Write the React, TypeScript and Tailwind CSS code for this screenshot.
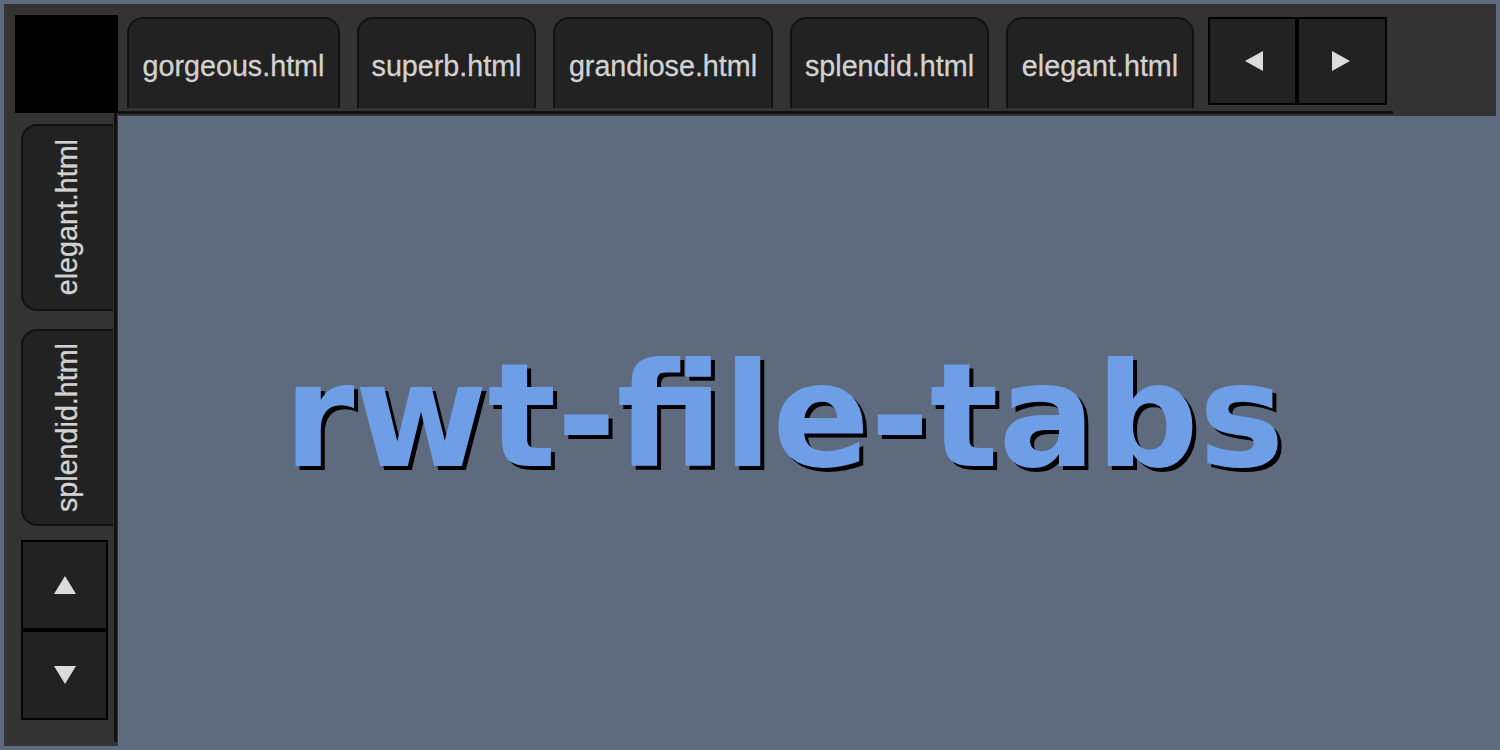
import React from "react";

const topTabs: { name: string; w: string }[] = [
  { name: "gorgeous.html", w: "w-[213px]" },
  { name: "superb.html", w: "w-[179px]" },
  { name: "grandiose.html", w: "w-[220px]" },
  { name: "splendid.html", w: "w-[199px]" },
  { name: "elegant.html", w: "w-[188px]" },
];

function Tri({ dir }: { dir: "left" | "right" | "up" | "down" }) {
  const pts: Record<string, string> = {
    left: "20,0 20,20 2,10",
    right: "0,0 0,20 18,10",
    up: "10,1 21,19 -1,19",
    down: "-1,1 21,1 10,19",
  };
  return (
    <svg width="20" height="20" viewBox="0 0 20 20" className="overflow-visible">
      <polygon points={pts[dir]} fill="#dcdcdc" />
    </svg>
  );
}

export default function App() {
  return (
    <div
      className="w-[1500px] h-[750px] bg-[#5e6b7f] p-[4px] grid grid-cols-[114px_1fr] grid-rows-[112px_1fr] overflow-hidden"
      style={{ fontFamily: '"Liberation Sans", Arial, sans-serif' }}
    >
      {/* top-left corner */}
      <div className="bg-[#333333] pl-[11px] pt-[11px]">
        <div className="w-[103px] h-[98px] bg-black" />
      </div>

      {/* top tab bar */}
      <div className="bg-[#333333] pt-[13px]">
        <div className="flex items-start w-fit border-b-[3px] border-[#111111] pl-[9px] pr-[6px] pb-[3px] gap-[17px]">
          {topTabs.map((t) => (
            <div
              key={t.name}
              className={`${t.w} h-[91px] shrink-0 bg-[#222222] border-2 border-b-0 border-[#111111] rounded-t-[16px] flex items-center justify-center pt-[6px] text-[28.7px] text-[#d2d2d2] [-webkit-text-stroke:0.3px_#d2d2d2]`}
            >
              {t.name}
            </div>
          ))}
          <div className="flex -ml-[3px]">
            <div className="w-[89px] h-[88px] bg-[#222222] border-2 border-black flex items-center justify-center">
              <Tri dir="left" />
            </div>
            <div className="w-[90px] h-[88px] bg-[#222222] border-2 border-black flex items-center justify-center">
              <Tri dir="right" />
            </div>
          </div>
        </div>
      </div>

      {/* left vertical tabs */}
      <div className="bg-[#333333] pb-[4px] flex">
        <div className="w-[113px] -mt-[3px] border-r-[3px] border-[#111111] pl-[17px] pr-[1px] pt-[11px] flex flex-col">
          <div className="w-[92px] h-[187px] bg-[#222222] border-2 border-r-0 border-[#111111] rounded-l-[16px] flex items-center justify-center">
            <span className="[writing-mode:vertical-rl] rotate-180 text-[28.7px] text-[#d2d2d2] [-webkit-text-stroke:0.3px_#d2d2d2]">elegant.html</span>
          </div>
          <div className="mt-[18px] w-[92px] h-[197px] bg-[#222222] border-2 border-r-0 border-[#111111] rounded-l-[16px] flex items-center justify-center">
            <span className="[writing-mode:vertical-rl] rotate-180 text-[28.7px] text-[#d2d2d2] [-webkit-text-stroke:0.3px_#d2d2d2]">splendid.html</span>
          </div>
          <div className="mt-[14px] w-[87px] h-[90px] bg-[#222222] border-2 border-black flex items-center justify-center">
            <Tri dir="up" />
          </div>
          <div className="w-[87px] h-[90px] bg-[#222222] border-2 border-black flex items-center justify-center">
            <Tri dir="down" />
          </div>
        </div>
      </div>

      {/* main content */}
      <div className="flex items-center justify-center pr-[46px] pb-[30px]">
        <h1
          className="text-[144px] leading-none font-bold text-[#6d9ee6] [text-shadow:4px_4px_0_#000]"
          style={{ fontFamily: '"DejaVu Sans", sans-serif' }}
        >
          rwt-file-tabs
        </h1>
      </div>
    </div>
  );
}
